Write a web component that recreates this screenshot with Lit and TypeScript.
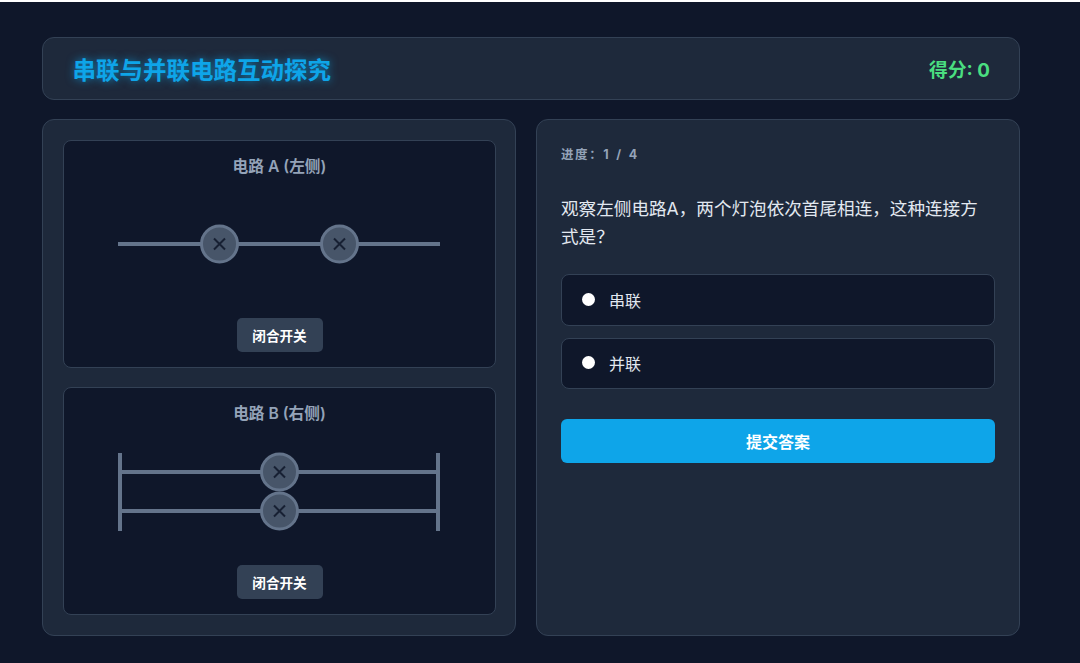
import { LitElement, html, css, svg } from "lit";
import { customElement } from "lit/decorators.js";

const bulb = (cx: number, cy: number) => svg`
  <circle cx=${cx} cy=${cy} r="18" fill="#475569" stroke="#64748b" stroke-width="3"></circle>
  <path d="M${cx - 5.5} ${cy - 5.5}L${cx + 5.5} ${cy + 5.5}M${cx + 5.5} ${cy - 5.5}L${cx - 5.5} ${cy + 5.5}" stroke="#172033" stroke-width="2" fill="none"></path>`;

@customElement("app-root")
export class AppRoot extends LitElement {
  static styles = css`
    :host {
      display: block;
      background: #fff;
      padding-top: 2px;
      font-family: "Inter", "Noto Sans CJK SC", sans-serif;
      color: #e2e8f0;
    }
    .page {
      box-sizing: border-box;
      height: 661px;
      background: #0f172a;
      padding: 35px 60px 0 42px;
      display: flex;
      flex-direction: column;
      gap: 19px;
      overflow: hidden;
    }
    .panel {
      box-sizing: border-box;
      background: #1e293b;
      border: 1px solid #334155;
      border-radius: 12px;
    }
    header {
      height: 63px;
      display: flex;
      align-items: center;
      justify-content: space-between;
      padding: 0 29px 0 29.5px;
    }
    h1 {
      margin: 0;
      font-size: 23.5px;
      font-weight: 700;
      color: #0ea5e9;
      text-shadow: 0 0 8px rgba(14, 165, 233, 0.7);
    }
    .score { font-size: 18.8px; font-weight: 700; color: #4ade80; }
    main {
      display: grid;
      grid-template-columns: 474px 484px;
      gap: 20px;
      height: 516px;
    }
    .left {
      display: flex;
      flex-direction: column;
      gap: 19.5px;
      padding: 20px 19px 20px 20px;
    }
    .card {
      box-sizing: border-box;
      height: 227.5px;
      background: #0f172a;
      border: 1px solid #334155;
      border-radius: 8px;
      display: flex;
      flex-direction: column;
      align-items: center;
      padding-top: 15px;
    }
    h3 { margin: 0; font-size: 15.7px; line-height: 22px; font-weight: 600; color: #94a3b8; }
    svg.circuit { display: block; width: 431px; height: 110px; margin-top: 1px; flex: none; }
    .toggle {
      margin-top: 28.5px;
      width: 86px;
      height: 34px;
      padding: 0;
      border: 0;
      border-radius: 5px;
      background: #334155;
      color: #fff;
      font: 700 13.6px "Inter", "Noto Sans CJK SC", sans-serif;
    }
    .right { padding: 25px 24px 0; width: 484px; }
    .progress { font-size: 12.5px; line-height: 20px; font-weight: 700; color: #94a3b8; letter-spacing: 1.6px; word-spacing: 1.5px; }
    .q { margin: 30px 10px 0 0; font-size: 17.6px; line-height: 28px; color: #e2e8f0; }
    .opts { display: flex; flex-direction: column; gap: 12px; margin-top: 23px; }
    .opt {
      box-sizing: border-box;
      height: 51.5px;
      background: #0f172a;
      border: 1px solid #334155;
      border-radius: 8px;
      display: flex;
      align-items: center;
      padding-left: 20px;
      gap: 14px;
      font-size: 16px;
      color: #e2e8f0;
    }
    .dot { width: 13px; height: 13px; border-radius: 50%; background: #fff; margin-top: -1px; }
    .submit {
      display: block;
      width: 100%;
      height: 44px;
      margin-top: 29.5px;
      border: 0;
      border-radius: 6px;
      background: #0ea5e9;
      color: #fff;
      font: 700 16px "Inter", "Noto Sans CJK SC", sans-serif;
    }
  `;

  render() {
    return html`<div class="page">
      <header class="panel">
        <h1>串联与并联电路互动探究</h1>
        <div class="score">得分: 0</div>
      </header>
      <main>
        <section class="panel left">
          <div class="card">
            <h3>电路 A (左侧)</h3>
            <svg class="circuit" viewBox="0 0 431 110">
              <path d="M54 65H376" stroke="#64748b" stroke-width="4" fill="none"></path>
              ${bulb(155.5, 65)}${bulb(275.5, 65)}
            </svg>
            <button class="toggle">闭合开关</button>
          </div>
          <div class="card">
            <h3>电路 B (右侧)</h3>
            <svg class="circuit" viewBox="0 0 431 110">
              <path d="M56 27V105M374 27V105" stroke="#64748b" stroke-width="4" fill="none"></path>
              <path d="M56 46H374M56 85H374" stroke="#64748b" stroke-width="4" fill="none"></path>
              ${bulb(215.5, 46)}${bulb(215.5, 85)}
            </svg>
            <button class="toggle">闭合开关</button>
          </div>
        </section>
        <section class="panel right">
          <div class="progress">进度：1 / 4</div>
          <p class="q">观察左侧电路A，两个灯泡依次首尾相连，这种连接方式是？</p>
          <div class="opts">
            <div class="opt"><span class="dot"></span><span>串联</span></div>
            <div class="opt"><span class="dot"></span><span>并联</span></div>
          </div>
          <button class="submit">提交答案</button>
        </section>
      </main>
    </div>`;
  }
}
